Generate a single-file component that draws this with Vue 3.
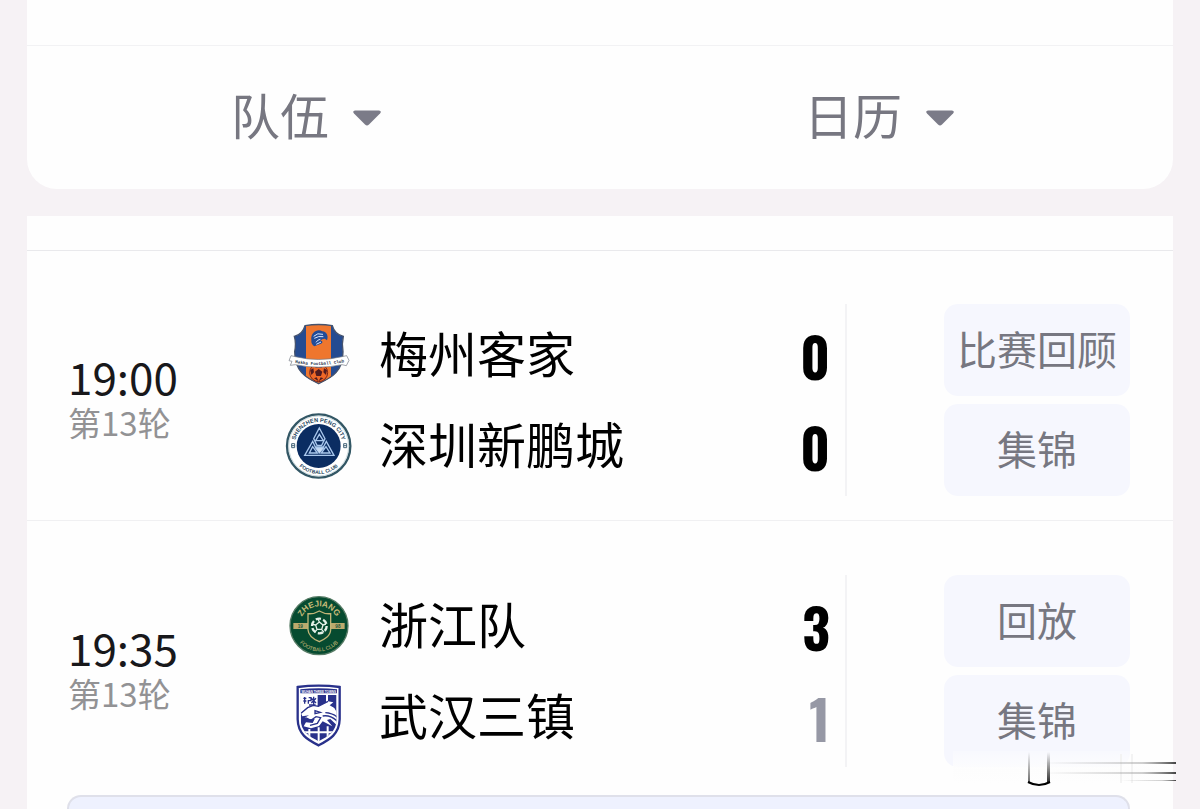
<template>
    <div class="page">
        <!-- Filters -->
        <header class="filter-card">
            <div class="filter-spacer"></div>
            <div class="filters">
                <button v-for="filter in filters" :key="filter" type="button" class="filter-button">
                    <span class="filter-label">{{ filter }}</span>
                    <svg class="caret" viewBox="0 0 30 18" aria-hidden="true">
                        <path d="M3 1.500H27Q30 2 28 4.500L17 15.500Q15 17.500 13 15.500L2 4.500Q0 2 3 1.500Z" fill="#7b7b88" />
                    </svg>
                </button>
            </div>
        </header>

        <!-- Match list -->
        <main class="match-list">
            <div class="list-head"></div>
            <section v-for="match in matches" :key="match.time" class="match">
                <div class="match-time">
                    <time class="kickoff">{{ match.time }}</time>
                    <span class="round">{{ match.round }}</span>
                </div>
                <div class="teams">
                    <div v-for="team in match.teams" :key="team.name" class="team">
                        <svg v-if="team.logo === 'meizhou'" class="logo" viewBox="45 33 204 204" aria-hidden="true">
                            <clipPath id="meizhou-shield">
                                <path d="M73 79Q98 73 105 47Q146 40 187 47Q194 73 220 79Q215 100 219 125C219 184 187 202 146 221C105 202 75 184 74 125Q79 100 73 79Z" />
                            </clipPath>
                            <g clip-path="url(#meizhou-shield)">
                                <rect x="60" y="35" width="175" height="190" fill="#254b91" />
                                <rect x="108" y="35" width="75" height="190" fill="#ef762e" />
                            </g>
                            <path d="M73 79Q98 73 105 47Q146 40 187 47Q194 73 220 79Q215 100 219 125C219 184 187 202 146 221C105 202 75 184 74 125Q79 100 73 79Z" fill="none" stroke="#46536d" stroke-width="4" />
                            <path d="M124 91C121 67 143 55 157 64C171 65 176 80 171 91C164 82 157 87 151 92C158 92 160 98 153 101L133 109C127 105 123 99 124 91Z" fill="#214b98" />
                            <path d="M131 79Q142 67 159 73M133 85Q146 77 160 80M138 97Q144 88 151 88M139 103L153 96" fill="none" stroke="#dce8ff" stroke-width="3" />
                            <circle cx="146" cy="188" r="27" fill="#ef6827" stroke="#7c251c" stroke-width="3" />
                            <path d="M146 177L157 185L153 198H139L135 185ZM132 166L146 162L160 166L155 173H137ZM121 180L130 175L132 187L124 195ZM171 180L162 175L160 187L168 195ZM132 205L140 202L146 214ZM160 205L152 202L146 214Z" fill="#511b20" />
                            <path d="M63 137L76 140Q146 157 216 140L230 137L237 151L229 167L216 164Q146 179 76 164L61 166L66 154L57 152Z" fill="#fff" stroke="#737983" stroke-width="2" />
                            <path id="meizhou-ribbon" d="M72 158Q146 173 226 156" fill="none" />
                            <text font-family="Liberation Mono" font-size="13" font-weight="700" fill="#27334b" text-anchor="middle"><textPath href="#meizhou-ribbon" startOffset="50%">Hakka Football Club</textPath></text>
                        </svg>

                        <svg v-else-if="team.logo === 'shenzhen'" class="logo" viewBox="45 36 204 204" aria-hidden="true">
                            <circle cx="146" cy="138" r="95" fill="#fff" stroke="#335765" stroke-width="7" />
                            <circle cx="146" cy="138" r="90" fill="none" stroke="#b4c8ce" stroke-width="2" />
                            <circle cx="146" cy="138" r="66" fill="#0b2d62" />
                            <path d="M148 84L165 116L155 136H141L131 116ZM148 103L137 122H160ZM128 124L136 141H160L169 124L192 166H104ZM128 140L118 159H142L134 148ZM168 140L162 148L154 159H180ZM138 145H159L148 159Z" fill="none" stroke="#a9c7ec" stroke-width="4" />
                            <path d="M138 145H159L148 159Z" fill="#c8dcf4" />
                            <path id="shenzhen-top" d="M74 138A72 72 0 0 1 218 138" fill="none" />
                            <path id="shenzhen-bottom" d="M62 138A84 84 0 0 0 230 138" fill="none" />
                            <text font-family="Liberation Sans" font-size="17" font-weight="700" fill="#27465e" text-anchor="middle"><textPath href="#shenzhen-top" startOffset="50%">SHENZHEN PENG CITY</textPath></text>
                            <text font-family="Liberation Sans" font-size="15" font-weight="700" fill="#27465e" text-anchor="middle"><textPath href="#shenzhen-bottom" startOffset="50%">FOOTBALL CLUB</textPath></text>
                            <path d="M65 131H74V143H65ZM65 137H74M221 131H230V143H221ZM221 137H230" fill="none" stroke="#46657a" stroke-width="3" />
                        </svg>

                        <svg v-else-if="team.logo === 'zhejiang'" class="logo" viewBox="45 21 204 204" aria-hidden="true">
                            <circle cx="147" cy="122" r="87" fill="#064b30" stroke="#567b65" stroke-width="4" />
                            <path d="M70 114H224V132H70Z" fill="#bbaa6d" />
                            <path d="M114 86Q131 88 148 78Q165 88 182 86V134C181 154 163 163 148 170C132 163 115 154 114 134Z" fill="#064b30" stroke="#c2b678" stroke-width="4" />
                            <circle cx="148" cy="123" r="22" fill="none" stroke="#e6f2e9" stroke-width="7" stroke-dasharray="16 7" />
                            <path d="M148 111L159 120L155 133H141L137 120ZM148 111L144 102M159 120L168 117M155 133L162 142M141 133L134 142M137 120L128 118" fill="none" stroke="#e6f2e9" stroke-width="4" />
                            <path id="zhejiang-top" d="M89 122A58 58 0 0 1 205 122" fill="none" />
                            <path id="zhejiang-bottom" d="M70 122A77 77 0 0 0 224 122" fill="none" />
                            <text font-family="Liberation Sans" font-size="25" font-weight="700" fill="#c7bb79" text-anchor="middle"><textPath href="#zhejiang-top" startOffset="50%">ZHEJIANG</textPath></text>
                            <text font-family="Liberation Sans" font-size="16" fill="#c7bb79" text-anchor="middle"><textPath href="#zhejiang-bottom" startOffset="50%">FOOTBALL CLUB</textPath></text>
                            <text x="83" y="129" font-family="Liberation Sans" font-size="14" font-weight="700" fill="#28573b">19</text>
                            <text x="196" y="129" font-family="Liberation Sans" font-size="14" font-weight="700" fill="#28573b">98</text>
                        </svg>

                        <svg v-else class="logo" viewBox="45 24 204 204" aria-hidden="true">
                            <path d="M83 36Q146 28 209 36V133C208 178 178 194 146 211C112 194 84 178 83 133Z" fill="#fff" stroke="#29318b" stroke-width="7" />
                            <path d="M91 43Q146 37 201 43V55H91Z" fill="#29318b" />
                            <text x="146" y="53" font-family="Liberation Sans" font-size="9" font-weight="700" fill="#fff" text-anchor="middle">WUHAN THREE TOWNS</text>
                            <clipPath id="wuhan-shield">
                                <path d="M92 60H200V133C199 170 175 184 146 199C116 184 93 170 92 133Z" />
                            </clipPath>
                            <g clip-path="url(#wuhan-shield)">
                                <path d="M92 60H200V200H92Z" fill="#29318b" />
                                <path d="M92 60H143V92L113 98L92 115Z" fill="#fff" />
                                <path d="M171 58V84M118 162V195M146 157V203M173 154V190M88 172H205" stroke="#fff" stroke-width="6" />
                                <path d="M100 70H109M104 66V86M100 78H109M116 68H123V77H115V86M131 65V88M124 70L138 84M138 70L124 84M117 90H137" stroke="#29318b" stroke-width="4" fill="none" />
                                <path d="M93 115L113 98L130 91L145 94L174 79L190 82L179 91L193 99L200 111V150L181 132L171 135L187 154L158 139L147 153L123 160L101 154L108 142L128 144L134 132L119 133L104 128L117 121L97 124Z" fill="#fff" />
                                <path d="M93 115L113 98L130 91L145 94L174 79" fill="none" stroke="#29318b" stroke-width="4" />
                                <path d="M135 107L151 112L135 116ZM106 128L123 136L138 125L152 128L142 145L120 151M158 123Q181 119 202 139M166 113Q187 114 203 127" fill="none" stroke="#29318b" stroke-width="4" />
                            </g>
                        </svg>
                        <span class="team-name">{{ team.name }}</span>
                        <span class="score" :class="{ 'is-loser': team.lost }">{{ team.score }}</span>
                    </div>
                </div>
                <div class="actions">
                    <button v-for="action in match.actions" :key="action" type="button" class="action-button">{{ action }}</button>
                    <svg v-if="match.streaks" class="streaks" viewBox="0 0 224 38" aria-hidden="true">
                        <defs>
                            <linearGradient id="fade-right" x1="0" x2="1">
                                <stop offset="0.400" stop-color="#888" stop-opacity="0" />
                                <stop offset="0.850" stop-color="#888" stop-opacity="0.400" />
                                <stop offset="1" stop-color="#444" />
                            </linearGradient>
                            <linearGradient id="fade-down" x1="0" x2="0" y1="0" y2="1">
                                <stop offset="0" stop-color="#111" stop-opacity="0" />
                                <stop offset="1" stop-color="#111" stop-opacity="0.900" />
                            </linearGradient>
                            <linearGradient id="haze" x1="0" x2="0" y1="0" y2="1">
                                <stop offset="0" stop-color="#fff" stop-opacity="0.200" />
                                <stop offset="0.600" stop-color="#fdfdfd" stop-opacity="0.900" />
                                <stop offset="1" stop-color="#fefefe" />
                            </linearGradient>
                        </defs>
                        <rect y="1" width="220" height="32" fill="url(#haze)" />
                        <path d="M168 4V33M179 4V33" stroke="#f3f3f3" stroke-width="2" />
                        <rect y="12" width="223" height="2" fill="url(#fade-right)" />
                        <rect y="22" width="223" height="2" fill="url(#fade-right)" />
                        <rect x="130" y="30" width="93" height="1" fill="url(#fade-right)" />
                        <rect x="75" y="2" width="2" height="31" fill="url(#fade-down)" opacity="0.700" />
                        <rect x="94" y="2" width="3" height="31" fill="url(#fade-down)" />
                        <path d="M75 32Q86 38 97 32" fill="none" stroke="#000" stroke-width="2" />
                    </svg>
                </div>
            </section>
            <div class="next-panel"></div>
        </main>
    </div>
</template>

<script setup>
const filters = ['队伍', '日历'];

const matches = [
    {
        time: '19:00',
        round: '第13轮',
        teams: [
            { name: '梅州客家', logo: 'meizhou', score: 0 },
            { name: '深圳新鹏城', logo: 'shenzhen', score: 0 },
        ],
        actions: ['比赛回顾', '集锦'],
    },
    {
        time: '19:35',
        round: '第13轮',
        teams: [
            { name: '浙江队', logo: 'zhejiang', score: 3 },
            { name: '武汉三镇', logo: 'wuhan', score: 1, lost: true },
        ],
        actions: ['回放', '集锦'],
        streaks: true,
    },
];
</script>

<style>
body {
    margin: 0;
    background: #f6f2f5;
}
</style>

<style scoped>
.page {
    display: flex;
    flex-direction: column;
    gap: 27px;
    box-sizing: border-box;
    min-height: 100vh;
    padding: 0 27px;
    font-family: "Noto Sans CJK SC", sans-serif;
    color: #000;
}

button {
    border: 0;
    padding: 0;
    font-family: inherit;
    cursor: pointer;
}

/* Filters */
.filter-card {
    background: #fefefe;
    border-radius: 0 0 30px 30px;
}

.filter-spacer {
    height: 45px;
    border-bottom: 1px solid #f2f2f4;
}

.filters {
    display: grid;
    grid-template-columns: 1fr 1fr;
}

.filter-button {
    display: flex;
    align-items: center;
    justify-content: center;
    gap: 23px;
    height: 143px;
    padding-right: 14px;
    background: none;
    font-size: 49px;
    line-height: 64px;
    color: #777781;
}

.filter-label {
    padding-bottom: 8px;
}

.caret {
    width: 30px;
    height: 18px;
}

/* Match list */
.match-list {
    display: flex;
    flex: 1;
    flex-direction: column;
    background: #fefefe;
}

.list-head {
    height: 34px;
    border-bottom: 1px solid #e9e9ec;
}

.match {
    display: grid;
    grid-template-columns: 217px 1fr auto;
    align-items: center;
    padding: 53px 43px 24px 41px;
}

.match + .match {
    padding-top: 54px;
    padding-bottom: 28px;
    border-top: 1px solid #f0f0f2;
}

.match-time {
    display: flex;
    flex-direction: column;
    padding-bottom: 4px;
}

.kickoff {
    font-size: 44px;
    line-height: 48px;
    color: #18181b;
}

.round {
    font-size: 33px;
    line-height: 44px;
    color: #929294;
}

.teams {
    display: flex;
    flex-direction: column;
    justify-content: center;
    height: 192px;
    padding-right: 15px;
    border-right: 2px solid #f3f3f5;
}

.team {
    display: flex;
    align-items: center;
    height: 91px;
}

.logo {
    flex-shrink: 0;
    width: 68px;
    height: 68px;
    margin-right: 26px;
}

.team-name {
    flex: 1;
    padding-bottom: 6px;
    font-size: 49px;
    line-height: 64px;
}

.score {
    padding-top: 2px;
    font-family: "Oswald", "Liberation Sans Narrow", "Liberation Sans", sans-serif;
    font-size: 54px;
    font-weight: 700;
    line-height: 72px;
}

.score.is-loser {
    color: #9698a5;
}

.actions {
    position: relative;
    display: flex;
    flex-direction: column;
    gap: 8px;
    width: 186px;
    margin-left: 97px;
}

.action-button {
    height: 92px;
    padding-bottom: 4px;
    border-radius: 14px;
    background: #f6f7fe;
    font-size: 40px;
    line-height: 56px;
    color: #777781;
}

.streaks {
    position: absolute;
    right: -47px;
    bottom: -21px;
    width: 224px;
    height: 38px;
}

.next-panel {
    flex: 1;
    margin: 0 43px 0 40px;
    border: 2px solid #dfe0ea;
    border-bottom: 0;
    border-radius: 14px 14px 0 0;
    background: #eef1fe;
}
</style>
